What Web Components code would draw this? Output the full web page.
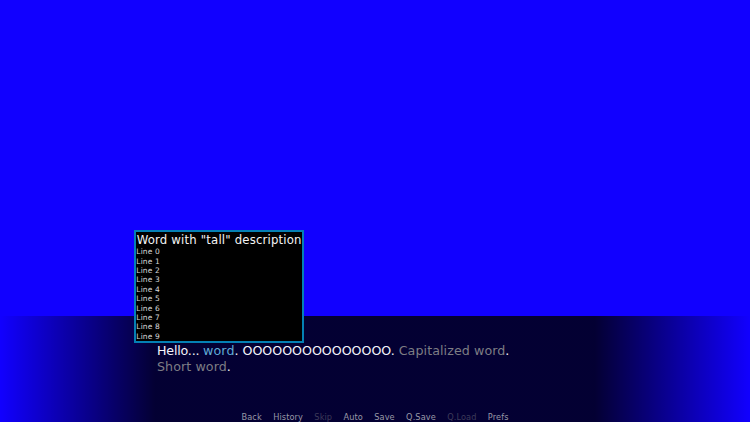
<!DOCTYPE html>
<html lang="en"><head><meta charset="utf-8"><title>Dialogue</title>
<style>html,body{margin:0;width:750px;height:422px;overflow:hidden;background:#1100ff}</style></head>
<body><game-stage></game-stage>
<script>
const make=(host,html)=>{host.attachShadow({mode:'open'}).innerHTML=html;};

customElements.define('word-tooltip',class extends HTMLElement{
 constructor(){super();
  const lines=Array.from({length:10},(_,i)=>`<div class="line">Line ${i}</div>`).join('');
  make(this,`<style>
  :host{display:block;box-sizing:border-box;width:170px;height:113px;border:2px solid #0480b4;background:#000;color:#f4f4f4;white-space:nowrap;padding-top:1px}
  .title{font-size:11.7px;line-height:15px;height:14.3px;padding-left:.7px;letter-spacing:.18px}
  .line{font-size:7.5px;line-height:9.4px;height:9.4px;padding-left:.3px;letter-spacing:.15px;color:#d8d8d8}
  </style><div class="title"><slot></slot></div>${lines}`);}
});
customElements.define('game-word',class extends HTMLElement{
 constructor(){super();make(this,`<style>:host{color:#7d7d84;letter-spacing:.08px}:host([active]){color:#5fabd6}</style><slot></slot>`);}
});
customElements.define('say-window',class extends HTMLElement{
 constructor(){super();make(this,`<style>
  :host{display:flex;flex-direction:column;justify-content:space-between;box-sizing:border-box;height:106px;padding:27px 0 0 157px;color:#f4f4fa;
  background:linear-gradient(90deg,rgba(0,0,0,0),rgba(0,0,0,.8) 155px,rgba(0,0,0,.8) 595px,rgba(0,0,0,0))}
  .text{font-size:12.65px;line-height:16px;white-space:nowrap}
  </style><div class="text"><slot></slot></div><slot name="menu"></slot>`);}
});
customElements.define('menu-item',class extends HTMLElement{
 constructor(){super();make(this,`<style>:host{display:block;color:#9898a6}:host([disabled]){color:#3d3b59}</style><slot></slot>`);}
});
customElements.define('quick-menu',class extends HTMLElement{
 constructor(){super();make(this,`<style>
  :host{display:flex;gap:11.3px;margin-left:84.5px;height:10px;font-size:8.2px;line-height:11px;letter-spacing:.11px;white-space:nowrap}
  </style><slot></slot>`);}
});
customElements.define('game-stage',class extends HTMLElement{
 constructor(){super();make(this,`<style>
  :host{display:flex;flex-direction:column;justify-content:flex-end;position:relative;width:750px;height:422px;background:#1100ff;font-family:"DejaVu Sans",sans-serif}
  word-tooltip{position:absolute;left:134px;top:230px}
  .hello{letter-spacing:-.2px}
  .row{letter-spacing:-.03px}
  </style>
  <say-window><span class="row"><span class="hello">Hello... </span><game-word active>word</game-word>. OOOOOOOOOOOOOOO. <game-word>Capitalized word</game-word>.</span><br><game-word>Short word</game-word>.
  <quick-menu slot="menu"><menu-item>Back</menu-item><menu-item>History</menu-item><menu-item disabled>Skip</menu-item><menu-item>Auto</menu-item><menu-item>Save</menu-item><menu-item>Q.Save</menu-item><menu-item disabled>Q.Load</menu-item><menu-item>Prefs</menu-item></quick-menu></say-window>
  <word-tooltip>Word with "tall" description</word-tooltip>`);}
});
</script></body></html>
